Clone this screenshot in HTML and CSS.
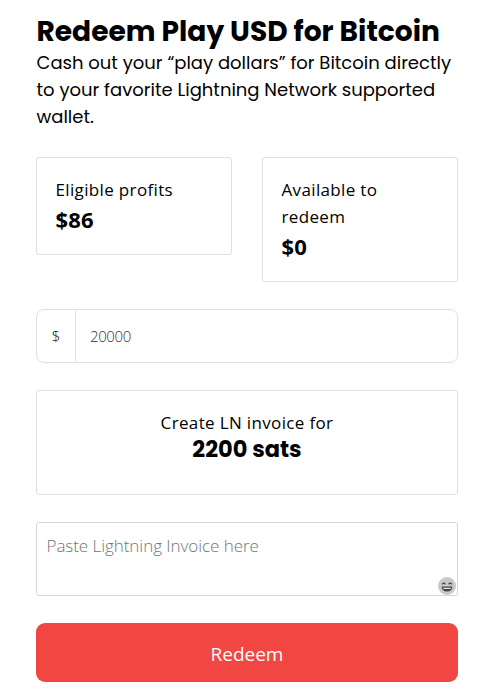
FILE: index.html
```
<!DOCTYPE html>
<html lang="en">
<head>
  <meta charset="UTF-8">
  <title>Redeem Play USD for Bitcoin</title>
  <link rel="stylesheet" href="styles.css">
</head>
<body>
  <main class="redeem">
    <h1 class="title">Redeem Play USD for Bitcoin</h1>
    <p class="intro">Cash out your “play dollars” for Bitcoin directly to your favorite Lightning Network supported wallet.</p>

    <div class="stats">
      <div class="card">
        <div class="label">Eligible profits</div>
        <div class="value">$86</div>
      </div>
      <div class="card">
        <div class="label">Available to redeem</div>
        <div class="value">$0</div>
      </div>
    </div>

    <form class="form">
      <div class="amount">
        <span class="currency">$</span>
        <input class="amount-input" type="text" value="20000">
      </div>

      <div class="card invoice">
        <div class="label">Create LN invoice for</div>
        <div class="sats">2200 sats</div>
      </div>

      <div class="paste">
        <textarea class="paste-input" placeholder="Paste Lightning Invoice here"></textarea>
        <svg class="emoji" viewBox="0 0 18 18">
          <circle cx="9" cy="9" r="9" fill="#c9c9c9"/>
          <path d="M4.2 7.4q1.6-2.4 3.2 0M10.6 7.4q1.6-2.4 3.2 0" fill="none" stroke="#444" stroke-width="1.3"/>
          <path d="M3.6 9.5h10.8q-.5 5-5.4 5t-5.4-5z" fill="#444"/>
          <path d="M5 10.7h8l-.5 1.4h-7z" fill="#e4e4e4"/>
        </svg>
      </div>

      <button class="button" type="button">Redeem</button>
    </form>
  </main>
</body>
</html>
```

FILE: styles.css
```
* { box-sizing: border-box; }
body { margin: 0; background: #fff; color: #000; font-family: "Segoe UI", "Open Sans", sans-serif; }
.redeem { padding: 14px 35px 0 36px; }

.title { margin: 0; font: 700 28.1px/35px Poppins, Inter, sans-serif; text-indent: 0.5px; white-space: nowrap; }
.intro { margin: 0; padding-left: 0.5px; font: 400 18px/27px Poppins, Inter, sans-serif; }

.stats { display: flex; align-items: flex-start; gap: 30px; margin-top: 27px; }
.card { border: 1px solid #e0e0e0; border-radius: 3px; padding: 18px 18.5px; }
.stats .card { flex: 1; min-width: 0; }
.label { font-size: 17px; line-height: 27px; letter-spacing: 0.35px; }
.value { padding-bottom: 1px; font-size: 22px; font-weight: 700; line-height: 32px; letter-spacing: 0.2px; }

.form { display: flex; flex-direction: column; margin-top: 27px; }
.amount { display: flex; height: 54px; border: 1px solid #e0e0e0; border-radius: 8px; }
.currency { width: 39px; border-right: 1px solid #e0e0e0; font-size: 15px; font-weight: 300; line-height: 52px; text-align: center; }
.amount-input { flex: 1; min-width: 0; padding: 0 14px; border: 0; background: none; color: #333; font: 300 15px "Segoe UI", "Open Sans", sans-serif; letter-spacing: -0.4px; }

.invoice { height: 105px; margin-top: 27px; text-align: center; }
.sats { font: 700 22.5px/26px Poppins, Inter, sans-serif; }

.paste { position: relative; height: 74px; margin-top: 27px; }
.paste-input { display: block; width: 100%; height: 100%; padding: 10px 9.5px; border: 1px solid #d6d6d6; border-radius: 3px; resize: none; font: 300 17px/26px "Segoe UI", "Open Sans", sans-serif; letter-spacing: -0.05px; }
.paste-input::placeholder { color: #6c757d; }
.emoji { position: absolute; right: 2px; bottom: 1px; width: 18px; height: 18px; }

.button { height: 59px; margin-top: 27px; padding-top: 3px; border: 0; border-radius: 9px; background: #f24643; color: #fff; font: 400 19px "Segoe UI", "Open Sans", sans-serif; }
```
